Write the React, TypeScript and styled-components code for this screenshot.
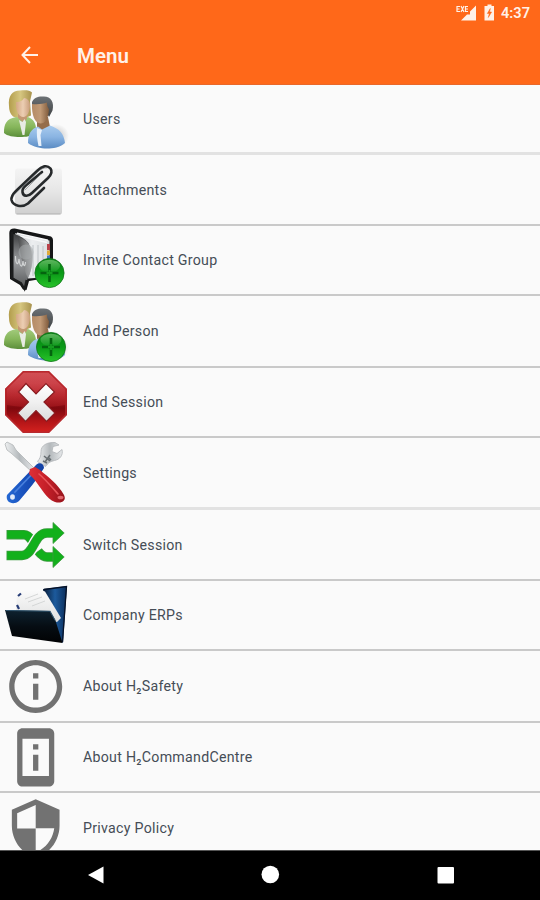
import React from "react";
import styled, { createGlobalStyle } from "styled-components";

const GlobalStyle = createGlobalStyle`
  * { box-sizing: border-box; }
  body { margin: 0; background: #fafafa; font-family: Roboto, "Noto Sans", sans-serif; }
`;

const Screen = styled.div`
  width: 540px;
  height: 900px;
  display: flex;
  flex-direction: column;
  overflow: hidden;
  background: #fafafa;
`;

const Header = styled.header`
  flex: none;
  height: 85px;
  background: #ff6819;
  border-bottom: 1px solid #e9682a;
  color: #fff1e8;
`;

const StatusBar = styled.div`
  height: 27px;
  display: flex;
  align-items: center;
  justify-content: flex-end;
  padding-right: 8px;
`;

const StatusIcons = styled.svg`
  display: block;
  width: 42px;
  height: 27px;
`;

const Clock = styled.span`
  width: 31px;
  margin-left: 5px;
  font-size: 14.6px;
  font-weight: 600;
  line-height: 27px;
  white-space: nowrap;
`;

const Toolbar = styled.div`
  height: 57px;
  display: flex;
  align-items: center;
  padding-left: 20px;
`;

const BackIcon = styled.svg`
  width: 20px;
  height: 20px;
  margin: -2px 37px 0 0;
`;

const Title = styled.h1`
  margin: 0;
  font-size: 20.5px;
  font-weight: 650;
  line-height: 28px;
`;

const List = styled.ul`
  flex: 1;
  min-height: 0;
  margin: 0;
  padding: 0;
  list-style: none;
  overflow: hidden;
`;

const Row = styled.li<{ $height: number; $soft?: boolean }>`
  height: ${(p) => p.$height}px;
  display: flex;
  align-items: center;
  border-bottom: ${(p) => (p.$soft ? "3px solid #e2e2e2" : "2px solid #c9c9c9")};
`;

const IconFrame = styled.svg`
  flex: none;
  width: 72px;
  height: 70px;
  margin: -4px 11px -4px 0;
`;

const Label = styled.span`
  font-size: 14.2px;
  line-height: 20px;
  letter-spacing: 0.27px;
  color: #454d56;
  white-space: nowrap;
`;

const NavBar = styled.nav`
  flex: none;
  height: 50px;
  background: #000;
  border-top: 1px solid #555;
  display: flex;
  align-items: center;
  justify-content: space-between;
  padding: 0 85px 1px 86px;
`;

const NavIcon = styled.svg`
  width: 20px;
  height: 20px;
`;

const Gradient = ({ id, stops, flat }: { id: string; stops: string[]; flat?: boolean }) => (
  <linearGradient id={id} x1="0" y1="0" x2={flat ? "1" : "0"} y2={flat ? "0" : "1"}>
    {stops.map((c, i) => (
      <stop key={i} offset={i / (stops.length - 1)} stopColor={c} />
    ))}
  </linearGradient>
);

const People = ({ p }: { p: string }) => (
  <>
    <defs>
      <Gradient id={p + "hair"} stops={["#b39d4c", "#d6c680", "#a8924d"]} flat />
      <Gradient id={p + "face"} stops={["#d3a882", "#ecceb3", "#c99e7c"]} flat />
      <Gradient id={p + "green"} stops={["#a3cb7d", "#86b65b", "#5c8f3b"]} />
      <Gradient id={p + "dark"} stops={["#6d7276", "#3f4244"]} />
      <Gradient id={p + "brown"} stops={["#b58b66", "#c19a76", "#7f5a3b"]} flat />
      <Gradient id={p + "blue"} stops={["#a9cbee", "#8ab4e2", "#5a8bc3"]} />
      <radialGradient id={p + "shadow"}>
        <stop offset="0" stopColor="#999" stopOpacity=".6" />
        <stop offset="1" stopColor="#999" stopOpacity="0" />
      </radialGradient>
    </defs>
    <ellipse cx="56" cy="52" rx="13" ry="12" fill={`url(#${p}shadow)`} />
    <path d="M9 22C8 12 12 6.500 20 6.500c5-.500 10-.500 12 2l-2 9 1 14-9 4-9-3c-3-3-4-6-4-10.500z" fill={`url(#${p}hair)`} />
    <path d="M4 49c0-9 2-14 12-16l6 1 6-1c6 2 9 8 8 16-5 3.500-10 4-16 4S7 52 4 49z" fill={`url(#${p}green)`} />
    <path d="M18 29h9v6l-4 3-5-4z" fill="#c39873" />
    <path d="M19 36l3.500 2 2-3 1.500 3-1.500 13h-2z" fill="#e8ebe3" />
    <path d="M16 18c5 0 7-2 8-4 3 0 6 3 6 7 0 7-3 12-6.500 12C18 33 15.500 26 16 18z" fill={`url(#${p}face)`} />
    <path d="M32 18c2-5 7-6 12-5.500 7 0 10.500 6 8.500 14L49 33l-5-10-12-1z" fill={`url(#${p}dark)`} />
    <path d="M37 33h11l2 10-7 6-6-6z" fill="#956d4b" />
    <path d="M28 59c0-9 3-14 10-16.500l4 3 8-4c9 3 14 8 15 17.500-5 4.500-12 5.500-18 5.500S33 63 28 59z" fill={`url(#${p}blue)`} />
    <path d="M37 44l5 2-1.500 5 1 11h-3c-1.500-7-2-12-1.500-18z" fill="#e9f1fa" />
    <path d="M32 20c6 .500 11 0 15-1.500 0 4 1 5 2 6.500-.500 10-4 14.500-8.500 14.500C35 39.500 31.500 31 32 20z" fill={`url(#${p}brown)`} />
  </>
);

const PlusBall = ({ p, cx, cy }: { p: string; cx: number; cy: number }) => (
  <>
    <defs>
      <Gradient id={p + "ball"} stops={["#087d14", "#0a9a17", "#28c42a"]} />
      <Gradient id={p + "gloss"} stops={["#8ed287", "#129b20"]} />
    </defs>
    <circle cx={cx} cy={cy} r="14.6" fill={`url(#${p}ball)`} stroke="#13761b" strokeWidth=".8" />
    <ellipse cx={cx} cy={cy - 7} rx="10.5" ry="6.3" fill={`url(#${p}gloss)`} opacity=".65" />
    <path d={`M${cx} ${cy - 9}v18M${cx - 9} ${cy}h18`} stroke="#04640f" strokeWidth="2.6" />
    <path d={`M${cx} ${cy - 3}v6M${cx - 3} ${cy}h6`} stroke="#169c20" strokeWidth="1.8" />
  </>
);

const Clip = () => (
  <>
    <defs>
      <Gradient id="card" stops={["#f4f4f4", "#e6e6e6", "#cfcfcf"]} />
    </defs>
    <rect x="15" y="13.5" width="47" height="46" rx="2.5" fill="url(#card)" />
    <path d="M16.500 58.800h44" stroke="#c0c0c0" strokeWidth="1.5" />
    <g fill="none" strokeLinecap="round" strokeLinejoin="round">
      <path
        d="M44 33L28 48.500C22 53 13 51 11.500 45C11 42 13 39 16 36L37 16C42 11 47 9.500 50.500 13.500C53 17 51 20 48 23L32 38C28 42 23 41.500 22.500 37C22 34 25 31 27 29.500L42 17"
        stroke="#26292b"
        strokeWidth="2.600"
      />
      <path d="M14 40L39 16c3-3 6-3 8-3M25 35l16-16" stroke="#84888b" strokeWidth=".7" />
    </g>
  </>
);

const Book = () => (
  <>
    <defs>
      <Gradient id="cover" stops={["#454647", "#8d8f90", "#b5b8ba"]} flat />
      <Gradient id="shade" stops={["#3d3e3f", "#9b9da0", "#555758"]} />
      <Gradient id="pages" stops={["#b9bcbe", "#eceef0", "#dcdfe1"]} flat />
    </defs>
    <path d="M9.300 8C9.300 4.500 12 3 16 3.800L51 11.500q2 1 2 3.500V52L29 56l-2.500 9L23 64.500 20 60 10 54z" fill="#151617" />
    <path d="M15 8l34.500 7.500V52L28 53.500z" fill="url(#pages)" />
    <path d="M17 8.300l31 7M20 11l27 6.500" stroke="#f7f8f9" strokeWidth="1.600" />
    <path d="M33 20v31M38 20v30M43 21v27" stroke="#c3c8cc" strokeWidth="1.200" />
    <path d="M13.500 9q9 2 15 9 8 17-1 36l-3 9-4-5-7-5z" fill="url(#shade)" />
    <path d="M18 12q14 4 15 20-1 13-5 21-6-10-10-41z" fill="url(#cover)" opacity=".75" />
    <circle cx="26" cy="27" r="7.500" fill="#a7abad" opacity=".55" />
    <path d="M15.500 31c0 9 3 10 3.500 3 1 9 3.500 9 4 2 .500 6 2 6 2.500 1" fill="none" stroke="#d2d4d5" strokeWidth="1.200" />
    <path d="M47 19h3v6h-3z" fill="#b8424a" />
    <path d="M47 25.500h3v4.500h-3z" fill="#dfaa38" />
    <path d="M47 30.500h3v4h-3z" fill="#3f76bb" />
    <path d="M12 7v46l9 5 3.500 6 2-9" fill="none" stroke="#1b1c1d" strokeWidth="2" />
    <PlusBall p="book" cx={49.5} cy={48} />
  </>
);

const Stop = () => (
  <>
    <defs>
      <Gradient id="stop" stops={["#c9353b", "#c6323a", "#ad1a21", "#7e080e", "#b01417", "#d6221f"]} />
      <Gradient id="cross" stops={["#fff", "#f0f0f0", "#dadada"]} />
      <Gradient id="stopGloss" stops={["#df777a", "#bd2026"]} />
    </defs>
    <path d="M23 4h26l18 18v26L49 66H23L5 48V22z" fill="url(#stop)" />
    <path d="M23.500 5.500h25L65 22v16c-16 3-41 3-58 0V22z" fill="url(#stopGloss)" opacity=".4" />
    <path d="M23.500 4.800h25L66 22v25.700L48.500 65.200h-25L5.800 47.700V22z" fill="none" stroke="#b8292e" strokeWidth="1.4" />
    <path d="M26 16.500l10 10.500 10-10.500 8.500 8.500-10.500 10 11 11-8.500 8.500L36 43.500 25.500 54.500 17.500 46l11-11-10-10z" fill="url(#cross)" stroke="#8a1b20" strokeWidth="1.2" />
  </>
);

const Tools = () => (
  <>
    <defs>
      <Gradient id="steel" stops={["#eef0f1", "#b4b9bc", "#e6e8ea"]} flat />
      <Gradient id="blueTool" stops={["#2468d4", "#1850bb", "#1240a2"]} flat />
      <Gradient id="redTool" stops={["#df3038", "#c41f28", "#96131b"]} flat />
    </defs>
    <path d="M55 4.500c-8-.500-14 3-14 9 0 5-1 7-3.500 10l8 5c3-4 5-5 9-6 5-1 9-5 7.500-11l-5 4-5-2 1-5 6-1.500z" fill="url(#steel)" stroke="#b0b4b7" strokeWidth=".8" />
    <path d="M44 18l6 5M50 17l-5 7M43 23l4 2M48 19l3 3" stroke="#666d71" strokeWidth="1.5" />
    <path d="M36 27c3-3.500 8-1.500 8 3-7 12-16 22-25 33-6 5-14 1-12-6z" fill="url(#blueTool)" />
    <path d="M35 33L15 54" stroke="#487fdc" strokeWidth="1.800" strokeLinecap="round" />
    <ellipse cx="12.500" cy="59" rx="2.400" ry="2.800" fill="#e0eafa" />
    <path d="M5 6l2-2 6 3 3 5 18 18-3 3-20-18-4-3z" fill="url(#steel)" stroke="#b2b6b8" strokeWidth=".8" />
    <path d="M30 31l5-2 5 3c8 7 18 14 24 25 3 6-3 9-9 7-9-3-14-15-22-24l-4-4z" fill="url(#redTool)" />
    <path d="M39 36c6 5 12 12 19 20" fill="none" stroke="#e9555b" strokeWidth="1.600" strokeLinecap="round" />
    <ellipse cx="60.500" cy="59.500" rx="3" ry="1.800" fill="#e2646a" />
  </>
);

const Shuffle = () => (
  <>
    <g fill="none" stroke="#3d9a40" strokeWidth="9.400">
      <path d="M6.500 24.700H24c4 0 6 3 8 6" />
      <path d="M38 41c3 4 5 6 9 6h8" />
    </g>
    <g fill="none" stroke="#12b01b" strokeWidth="7.800">
      <path d="M7.300 24.700H24c4 0 6 3 7.500 5.500" />
      <path d="M38.500 41.500c3 4 5 5.500 8.500 5.500h8" />
    </g>
    <path d="M53 36.500L64.200 47 53 57.500z" fill="#12b01b" stroke="#3d9a40" strokeWidth=".8" />
    <path d="M6.500 45.500H22C34 45.500 34 23 47 23h6" fill="none" stroke="#fafafa" strokeWidth="12" />
    <path d="M6.500 45.500H22C34 45.500 34 23 47 23h8" fill="none" stroke="#3d9a40" strokeWidth="9.400" />
    <path d="M53 12.500L64.200 23 53 33.500z" fill="#12b01b" stroke="#3d9a40" strokeWidth=".8" />
    <path d="M7.300 45.500H22C34 45.500 34 23 47 23h9" fill="none" stroke="#12b01b" strokeWidth="7.800" />
  </>
);

const Folder = () => (
  <>
    <defs>
      <Gradient id="back" stops={["#081b35", "#1c5a9c", "#0b2c58"]} flat />
      <Gradient id="front" stops={["#0e2230", "#060d13", "#010203"]} />
      <Gradient id="paper" stops={["#fbfbfb", "#dfe0e0"]} />
    </defs>
    <path d="M43 9l24-3-4 57-14-11z" fill="url(#back)" />
    <path d="M44 9.500l22.500-3L62.500 62" fill="none" stroke="#061127" strokeWidth="1.300" />
    <path d="M17 15l7-4 15-1.500 6 2L61 38l-4 4-41-11z" fill="url(#paper)" />
    <path d="M18 16l3-2.500M17 25l2 4" stroke="#273d77" strokeWidth="2.200" />
    <path d="M25 19l13-5M28 22l14-5M32 26l13-5" stroke="#d0d2d3" strokeWidth=".9" />
    <path d="M5 30l45 1 5.500 9.500L62.500 63 12 56z" fill="url(#front)" />
    <path d="M6 30.500l44 .8 5 9" fill="none" stroke="#31566f" strokeWidth="1.100" />
  </>
);

const INFO = "M11 7h2v2h-2zm0 4h2v6h-2zm1-9C6.480 2 2 6.480 2 12s4.480 10 10 10 10-4.480 10-10S17.520 2 12 2zm0 18c-4.410 0-8-3.590-8-8s3.590-8 8-8 8 3.590 8 8-3.590 8-8 8z";
const DEVICE = "M13 7h-2v2h2V7zm0 4h-2v6h2v-6zm4-9.990L7 1c-1.100 0-2 .900-2 2v18c0 1.100.900 2 2 2h10c1.100 0 2-.900 2-2V3c0-1.100-.900-1.990-2-1.990zM17 19H7V5h10v14z";
const SHIELD = "M12 1L3 5v6c0 5.550 3.840 10.740 9 12 5.160-1.260 9-6.450 9-12V5l-9-4zm0 10.990h7c-.530 4.120-3.280 7.790-7 8.940V12H5V6.300l7-3.110v8.800z";

const Material = ({ d }: { d: string }) => (
  <path d={d} fill="#727272" fillRule="evenodd" transform="translate(3.900 3.600) scale(2.650)" />
);

type Item = { label: string; icon: React.ReactNode; height: number; soft?: boolean };

const items: Item[] = [
  { label: "Users", icon: <People p="users" />, height: 70, soft: true },
  { label: "Attachments", icon: <Clip />, height: 71 },
  { label: "Invite Contact Group", icon: <Book />, height: 70 },
  { label: "Add Person", icon: <><People p="add" /><PlusBall p="addp" cx={51} cy={51} /></>, height: 72 },
  { label: "End Session", icon: <Stop />, height: 70 },
  { label: "Settings", icon: <Tools />, height: 72, soft: true },
  { label: "Switch Session", icon: <Shuffle />, height: 71 },
  { label: "Company ERPs", icon: <Folder />, height: 70 },
  { label: "About H₂Safety", icon: <Material d={INFO} />, height: 72 },
  { label: "About H₂CommandCentre", icon: <Material d={DEVICE} />, height: 70 },
  { label: "Privacy Policy", icon: <Material d={SHIELD} />, height: 72 },
];

export default function App() {
  return (
    <Screen>
      <GlobalStyle />
      <Header>
        <StatusBar>
          <StatusIcons viewBox="0 0 42 27">
            <path d="M22 5.500v15H7l6-6h3v-3z" fill="currentColor" />
            <path d="M6 6.500H3v5h3M3 9h2.500M7 6l3 6M10 6l-3 6M14 6.500h-2.500v5H14M11.500 9H14" fill="none" stroke="currentColor" strokeWidth="1.200" />
            <path d="M33.500 4.500h4V6H40v14.500h-9.500V6h3z" fill="currentColor" />
            <path d="M36.300 8.500l-3 5h2l-1 4 3.300-5.500h-2z" fill="#ff6819" stroke="#ff6819" strokeWidth=".5" />
          </StatusIcons>
          <Clock>4:37</Clock>
        </StatusBar>
        <Toolbar>
          <BackIcon viewBox="0 0 20 20" fill="none" stroke="currentColor" strokeWidth="2">
            <path d="M18 10H3M10 2L2.500 10l7.500 8" />
          </BackIcon>
          <Title>Menu</Title>
        </Toolbar>
      </Header>
      <List>
        {items.map((it) => (
          <Row key={it.label} $height={it.height} $soft={it.soft}>
            <IconFrame viewBox="0 0 72 70">{it.icon}</IconFrame>
            <Label>{it.label}</Label>
          </Row>
        ))}
      </List>
      <NavBar>
        <NavIcon viewBox="0 0 20 20"><path d="M2 10L17.500 1.500v17z" fill="#fff" /></NavIcon>
        <NavIcon viewBox="0 0 20 20"><circle cx="9.300" cy="9.500" r="8.800" fill="#fff" /></NavIcon>
        <NavIcon viewBox="0 0 20 20"><rect x="2.500" y="2" width="16.500" height="16.500" rx="1" fill="#fff" /></NavIcon>
      </NavBar>
    </Screen>
  );
}
